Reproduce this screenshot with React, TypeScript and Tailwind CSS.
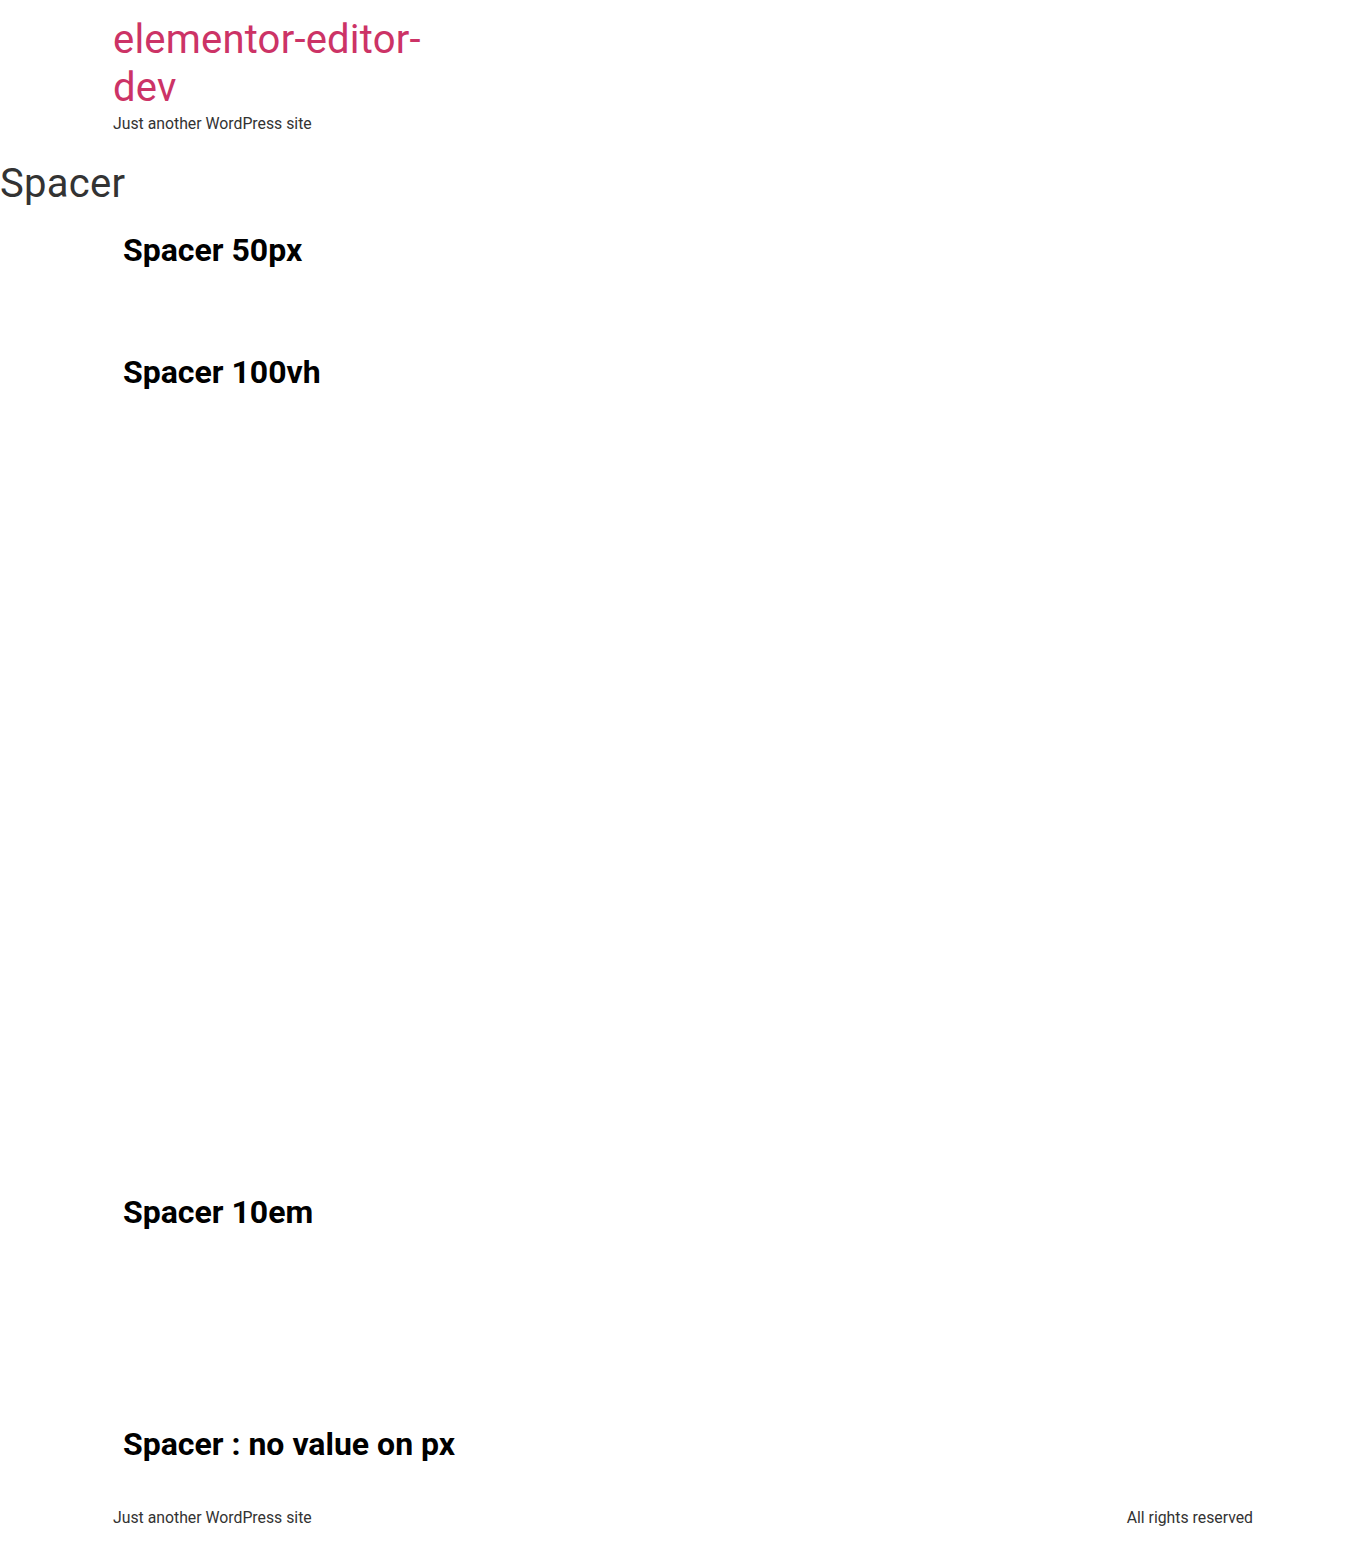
import React from "react";

const font = { fontFamily: "Roboto, 'Noto Sans', sans-serif" };

function Heading({ children }: { children: React.ReactNode }) {
  return (
    <h2 className="m-0 text-[32px] leading-none font-bold text-black">{children}</h2>
  );
}

export default function App() {
  return (
    <div className="bg-white min-h-[1546px] text-[#333]" style={font}>
      <header className="max-w-[1140px] mx-auto pt-4">
        <h1 className="m-0 w-[340px] text-[40px] leading-[1.2] tracking-[0.2px] font-normal text-[#cc3366]">
          elementor-editor-dev
        </h1>
        <p className="m-0 text-[15.8px] leading-6 text-[#333]">Just another WordPress site</p>
      </header>

      <main>
        <h1 className="mt-[24px] mb-0 text-[40px] leading-[1.2] tracking-[0.3px] font-normal text-[#333]">Spacer</h1>

        <section className="max-w-[1140px] mx-auto mt-[16px]">
          <div className="p-[10px] flex flex-col">
            <Heading>Spacer 50px</Heading>
            <div className="mt-5 h-[50px]" />
            <div className="mt-5">
              <Heading>Spacer 100vh</Heading>
            </div>
            <div className="mt-5 h-[768px]" />
            <div className="mt-5">
              <Heading>Spacer 10em</Heading>
            </div>
            <div className="mt-5 h-[160px]" />
            <div className="mt-5">
              <Heading>Spacer : no value on px</Heading>
            </div>
            <div className="mt-5 h-0" />
          </div>
        </section>
      </main>

      <footer className="max-w-[1140px] mx-auto pt-[16px] pb-[15px] flex justify-between text-[15.8px] leading-6 text-[#333]">
        <p className="m-0">Just another WordPress site</p>
        <p className="m-0">All rights reserved</p>
      </footer>
    </div>
  );
}
